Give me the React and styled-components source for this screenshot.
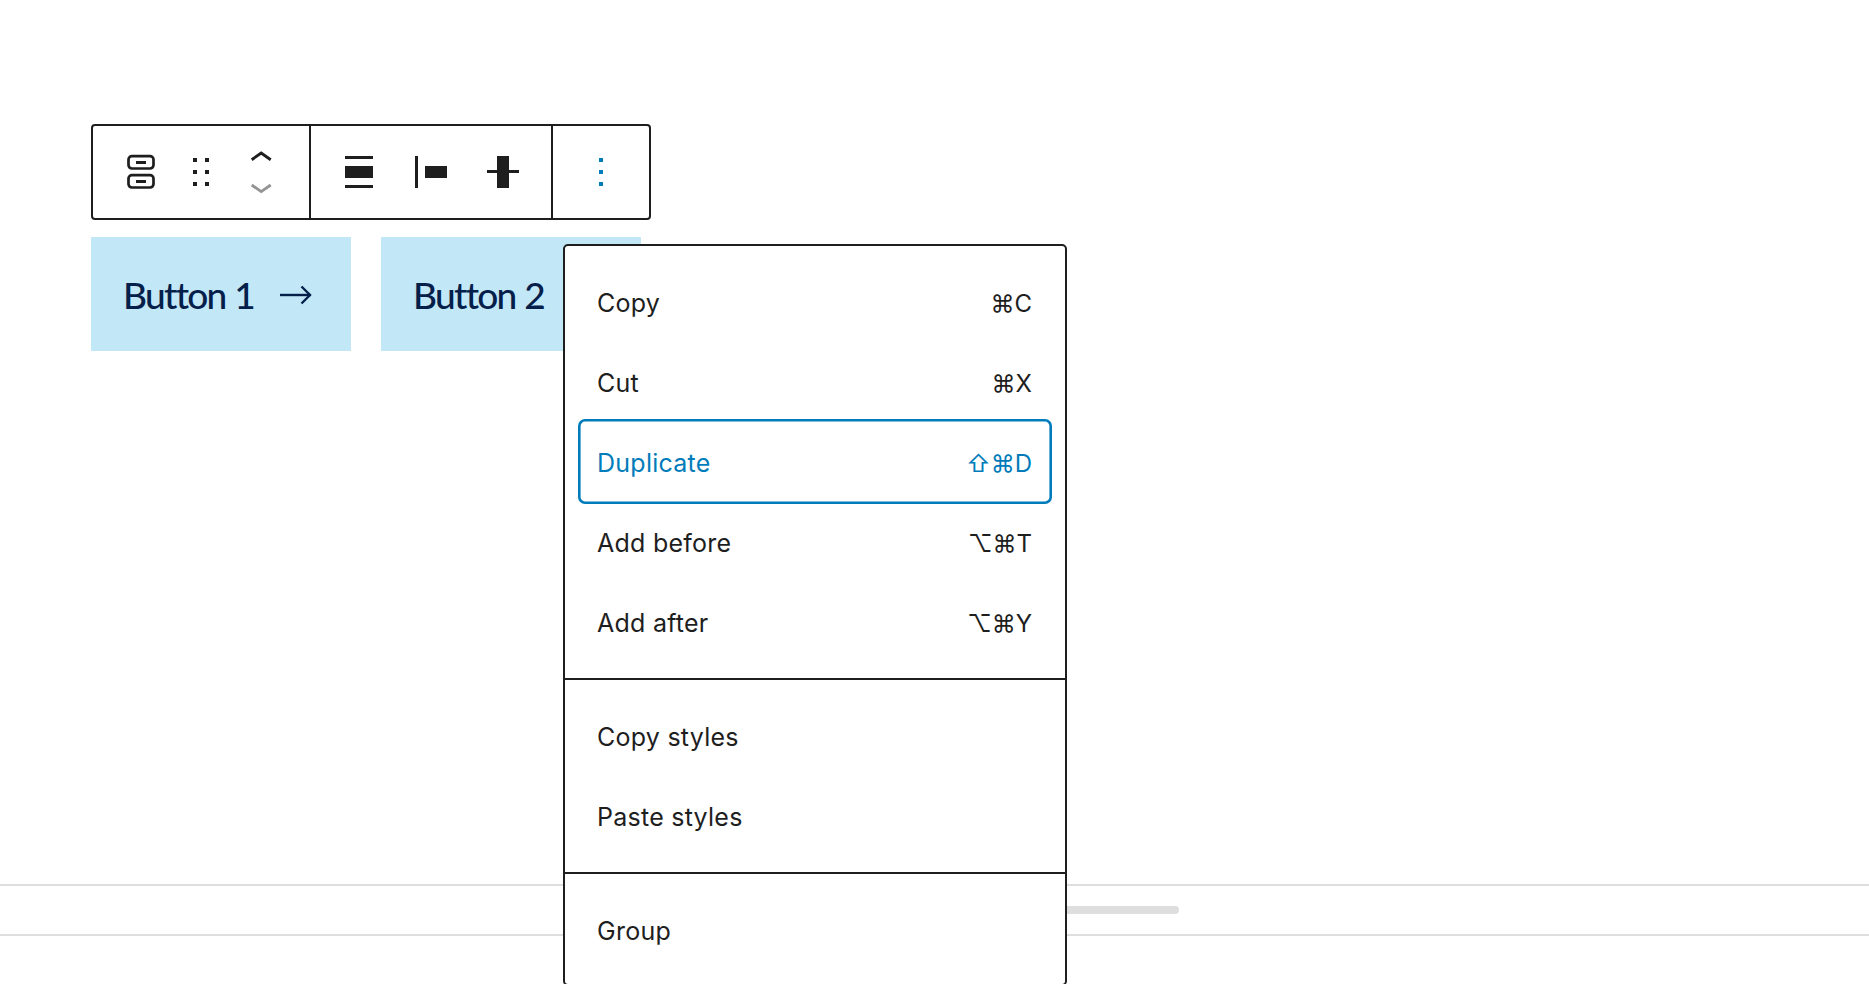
import React from "react";
import styled, { createGlobalStyle } from "styled-components";

const GlobalStyle = createGlobalStyle`
  html, body {
    margin: 0;
    padding: 0;
    background: #fff;
    height: 100%;
    overflow: hidden;
  }
`;

const Page = styled.div`
  position: relative;
  width: 1869px;
  height: 984px;
  padding-top: 124px;
  box-sizing: border-box;
  overflow: hidden;
  font-family: Inter, "DejaVu Sans", sans-serif;
`;

const Canvas = styled.div`
  padding-left: 91px;
`;

const Toolbar = styled.div`
  display: flex;
  width: 560px;
  height: 96px;
  box-sizing: border-box;
  border: 2px solid #1e1e1e;
  border-radius: 4px;
  background: #fff;
`;

const ToolGroup = styled.div`
  display: flex;
  align-items: center;
  justify-content: center;
  box-sizing: border-box;
  width: ${(p) => p.$width}px;
  flex: none;

  &:not(:last-child) {
    border-right: 2px solid #1e1e1e;
  }
`;

const ToolSlot = styled.div`
  display: flex;
  justify-content: center;
  width: ${(p) => p.$width}px;
`;

const Glyph = styled.svg`
  display: block;
  width: 40px;
  height: 48px;
  fill: ${(p) => p.$color || "#1e1e1e"};
`;

const ButtonRow = styled.div`
  display: flex;
  gap: 30px;
  margin-top: 17px;
`;

const BlockButton = styled.div`
  display: flex;
  align-items: center;
  gap: 26px;
  width: 260px;
  height: 114px;
  box-sizing: border-box;
  padding-left: 32px;
  background: #c2e7f6;
  color: #04204a;
  font-family: Lato, sans-serif;
  font-size: 37px;
  font-weight: 500;
  letter-spacing: -1.7px;
  word-spacing: 1px;
  white-space: nowrap;
`;

const Arrow = styled.svg`
  flex: none;
  width: 32px;
  height: 20px;
  margin-top: 1px;
  fill: none;
  stroke: #04204a;
  stroke-width: 2.4;
`;

const ScrollStrip = styled.div`
  display: flex;
  align-items: center;
  box-sizing: border-box;
  height: 52px;
  margin-top: 533px;
  padding-left: 900px;
  border-top: 2px solid #dedede;
  border-bottom: 2px solid #dedede;
`;

const ScrollThumb = styled.div`
  width: 279px;
  height: 8px;
  border-radius: 4px;
  background: #dedede;
`;

const Menu = styled.div`
  position: absolute;
  left: 563px;
  top: 244px;
  width: 504px;
  box-sizing: border-box;
  border: 2px solid #1e1e1e;
  border-radius: 5px;
  background: #fff;
`;

const MenuGroup = styled.div`
  padding: 16px 13px;

  &:not(:last-child) {
    border-bottom: 2px solid #1e1e1e;
  }

  &:last-child {
    padding-bottom: 14px;
  }
`;

const MenuRow = styled.div`
  position: relative;
  display: flex;
  align-items: center;
  justify-content: space-between;
  box-sizing: border-box;
  height: 80px;
  padding: 2px 20px 0 19px;
  color: ${(p) => (p.$active ? "#007cba" : "#1e1e1e")};
  font-size: 25px;
  letter-spacing: 0.25px;

  ${(p) =>
    p.$active &&
    `
    &::after {
      content: "";
      position: absolute;
      inset: -3px 0 -2px 0;
      box-shadow: inset 0 0 0 2.6px #007cba;
      border-radius: 7px;
    }
  `}
`;

const Shortcut = styled.span`
  font-family: Inter, "DejaVu Sans", sans-serif;
  font-size: 24px;
  letter-spacing: 0;
`;

const sections = [
  [
    { label: "Copy", keys: "⌘C" },
    { label: "Cut", keys: "⌘X" },
    { label: "Duplicate", keys: "⇧⌘D", active: true },
    { label: "Add before", keys: "⌥⌘T" },
    { label: "Add after", keys: "⌥⌘Y" },
  ],
  [{ label: "Copy styles" }, { label: "Paste styles" }],
  [{ label: "Group" }],
];

function ButtonArrow() {
  return (
    <Arrow viewBox="0 0 32 20">
      <path d="M0 10H30.5" />
      <path d="M21.5 1.5L30 10L21.5 18.5" />
    </Arrow>
  );
}

function App() {
  return (
    <Page>
      <GlobalStyle />
      <Canvas>
        <Toolbar>
          <ToolGroup $width={218}>
            <ToolSlot $width={60}>
              <Glyph viewBox="0 0 40 48">
                <rect x="7.5" y="8.2" width="25" height="12.3" rx="3.4" fill="none" stroke="#1e1e1e" strokeWidth="2.7" />
                <rect x="7.5" y="27.2" width="25" height="12.3" rx="3.4" fill="none" stroke="#1e1e1e" strokeWidth="2.7" />
                <rect x="15" y="13" width="10" height="3" />
                <rect x="15" y="32" width="10" height="3" />
              </Glyph>
            </ToolSlot>
            <ToolSlot $width={60}>
              <Glyph viewBox="0 0 40 48">
                <rect x="12" y="10" width="4" height="4" />
                <rect x="24" y="10" width="4" height="4" />
                <rect x="12" y="22" width="4" height="4" />
                <rect x="24" y="22" width="4" height="4" />
                <rect x="12" y="34" width="4" height="4" />
                <rect x="24" y="34" width="4" height="4" />
              </Glyph>
            </ToolSlot>
            <ToolSlot $width={60}>
              <Glyph viewBox="0 0 40 48">
                <path d="M10.7 11.7L20.2 5L29.7 11.7" fill="none" stroke="#1e1e1e" strokeWidth="2.9" />
                <path d="M10.7 37L20.2 43.6L29.7 37" fill="none" stroke="#949494" strokeWidth="2.9" />
              </Glyph>
            </ToolSlot>
          </ToolGroup>
          <ToolGroup $width={242}>
            <ToolSlot $width={72}>
              <Glyph viewBox="0 0 40 48">
                <rect x="6" y="8" width="28" height="3" />
                <rect x="6" y="18" width="28" height="12" />
                <rect x="6" y="37" width="28" height="3" />
              </Glyph>
            </ToolSlot>
            <ToolSlot $width={72}>
              <Glyph viewBox="0 0 40 48">
                <rect x="4" y="8" width="3" height="32" />
                <rect x="14" y="18" width="22" height="12" />
              </Glyph>
            </ToolSlot>
            <ToolSlot $width={72}>
              <Glyph viewBox="0 0 40 48">
                <rect x="4" y="22" width="32" height="3" />
                <rect x="14" y="8" width="12" height="32" />
              </Glyph>
            </ToolSlot>
          </ToolGroup>
          <ToolGroup $width={96}>
            <Glyph viewBox="0 0 40 48" $color="#007cba">
              <rect x="18" y="10" width="4" height="4" />
              <rect x="18" y="22" width="4" height="4" />
              <rect x="18" y="34" width="4" height="4" />
            </Glyph>
          </ToolGroup>
        </Toolbar>
        <ButtonRow>
          <BlockButton>
            Button 1
            <ButtonArrow />
          </BlockButton>
          <BlockButton>
            Button 2
            <ButtonArrow />
          </BlockButton>
        </ButtonRow>
      </Canvas>
      <ScrollStrip>
        <ScrollThumb />
      </ScrollStrip>
      <Menu>
        {sections.map((items, i) => (
          <MenuGroup key={i}>
            {items.map((item) => (
              <MenuRow key={item.label} $active={item.active}>
                <span>{item.label}</span>
                {item.keys && <Shortcut>{item.keys}</Shortcut>}
              </MenuRow>
            ))}
          </MenuGroup>
        ))}
      </Menu>
    </Page>
  );
}

export default App;
